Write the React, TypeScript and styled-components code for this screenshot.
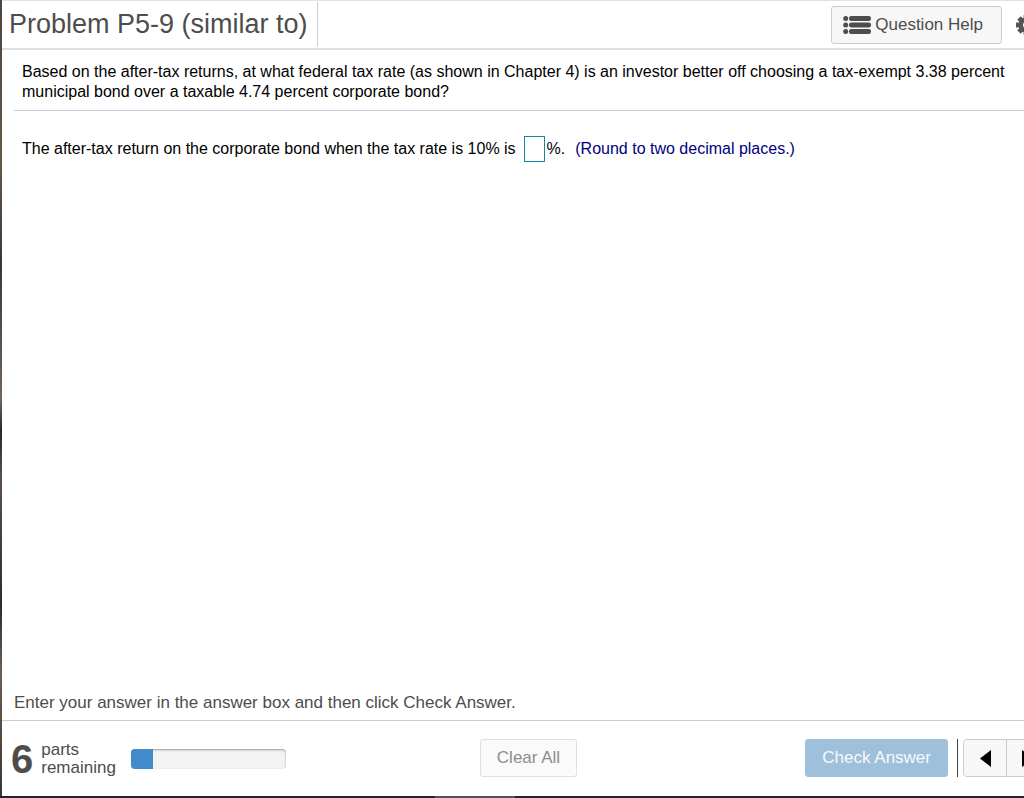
import React from "react";
import styled, { createGlobalStyle } from "styled-components";

const GlobalStyle = createGlobalStyle`
  *, *::before, *::after { box-sizing: border-box; }
  html { background: #fff; }
  body {
    margin: 0;
    overflow: hidden;
    color: #4d4d4d;
    font-family: "Liberation Sans", Arial, sans-serif;
  }
  button, input { font-family: inherit; }
`;

const Shell = styled.div`
  min-height: 100vh;
  padding: 0 0 2px 2px;
  background:
    linear-gradient(90deg, #262425 0 435px, #555354 435px 515px, #262425 515px) bottom / 100% 2px no-repeat,
    linear-gradient(#4c4440 0%, #66594c 20%, #3d3733 33%, #70655c 50%, #29272a 54%, #5c5149 60%, #2f2b2a 76%, #6b6056 84%, #3a3431 100%);
  display: flex;
`;

const Page = styled.div`
  flex: 1;
  min-width: 0;
  display: flex;
  flex-direction: column;
  background: #fff;
  overflow: hidden;
`;

const Header = styled.header`
  display: flex;
  align-items: center;
  height: 50px;
  border-top: 1px solid #dde1ea;
  border-bottom: 2px solid #dae0e8;
`;

const Title = styled.h1`
  margin: 0;
  padding: 0 9px 0 7px;
  font-size: 27px;
  line-height: 45px;
  font-weight: 400;
  white-space: nowrap;
  border-right: 1px solid #c9cedb;
`;

const HeaderTools = styled.div`
  display: flex;
  align-items: center;
  gap: 14px;
  margin: 0 -12px 0 auto;
`;

const Button = styled.button<{ $tone?: "primary" | "muted" }>`
  display: flex;
  align-items: center;
  justify-content: center;
  gap: 4px;
  height: 38px;
  padding: 0 16px;
  white-space: nowrap;
  font-size: 17px;
  line-height: 22px;
  border-radius: 3px;
  border: 1px solid
    ${({ $tone }) => ($tone === "primary" ? "#9fc0db" : $tone === "muted" ? "#dfdfdf" : "#cccccc")};
  background: ${({ $tone }) => ($tone === "primary" ? "#9fc0db" : $tone === "muted" ? "#fafafa" : "#f7f7f7")};
  color: ${({ $tone }) => ($tone === "primary" ? "#f7fafc" : $tone === "muted" ? "#8c8c8c" : "#4d4d4d")};
`;

const HelpButton = styled(Button)`
  padding: 0 18px 0 11px;
`;

const IconButton = styled.button`
  display: flex;
  padding: 0;
  border: 0;
  background: none;
  color: #555;
`;

const Question = styled.section`
  margin-left: 12px;
  padding: 12px 0 8px 8px;
  border-bottom: 1px solid #c6cbe0;
  color: #000;
`;

const BodyText = styled.p`
  margin: 0;
  font-size: 16px;
  line-height: 20px;
`;

const AnswerArea = styled.main`
  flex: 1;
  padding: 25px 20px;
  color: #000;
`;

const AnswerLine = styled.div`
  display: flex;
  align-items: center;
  flex-wrap: wrap;
  font-size: 16px;
  line-height: 20px;
`;

const AnswerInput = styled.input`
  width: 21px;
  height: 26px;
  margin: 0 2px 0 8px;
  padding: 0 2px;
  border: 1px solid #1486a6;
  border-radius: 0;
  background: #fff;
  font-size: 16px;
`;

const Hint = styled.span`
  margin-left: 10px;
  color: #000080;
`;

const Instruction = styled.p`
  margin: 0;
  padding: 0 12px 6px;
  font-size: 17px;
  line-height: 22px;
`;

const Footer = styled.footer`
  display: grid;
  grid-template-columns: 1fr auto 1fr;
  align-items: center;
  height: 76px;
  margin-right: -31px;
  padding-bottom: 1px;
  border-top: 1px solid #c6cbe0;
`;

const Remaining = styled.div`
  display: flex;
  align-items: center;
  padding: 2px 0 0 9px;
`;

const Count = styled.strong`
  font-size: 40px;
  line-height: 40px;
`;

const CountLabel = styled.span`
  width: 76px;
  margin: 0 14px 0 8px;
  font-size: 17px;
  line-height: 18px;
`;

const Track = styled.div`
  width: 155px;
  height: 20px;
  border-radius: 4px;
  overflow: hidden;
  background: #f3f3f3;
  box-shadow: inset 0 1px 2px #999;
`;

const Fill = styled.div`
  height: 100%;
  background: #428bca;
`;

const FooterTools = styled.div`
  display: flex;
  align-items: center;
  justify-content: flex-end;
  padding-right: 6px;
`;

const Divider = styled.span`
  width: 1px;
  height: 38px;
  margin: 0 5px 0 9px;
  background: #444;
`;

const Pager = styled.div`
  display: flex;
  border: 1px solid #ccc;
  border-radius: 4px;
  overflow: hidden;
`;

const PageButton = styled.button`
  display: flex;
  align-items: center;
  justify-content: center;
  width: 42px;
  height: 36px;
  padding: 0;
  border: 0;
  background: #f7f7f7;
  color: #000;
  & + & { border-left: 1px solid #ccc; }
`;

const ListIcon = () => (
  <svg width="28" height="20" viewBox="0 0 28 20" fill="#4d4d4d" aria-hidden="true">
    {[3.5, 10, 16.5].map((y) => (
      <g key={y}>
        <circle cx="2.7" cy={y} r="2.5" />
        <rect x="6" y={y - 2.5} width="22" height="5" rx="2.2" />
      </g>
    ))}
  </svg>
);

const GearIcon = () => (
  <svg width="20" height="20" viewBox="0 0 20 20" fill="none" stroke="currentColor" aria-hidden="true">
    <circle cx="10" cy="10" r="5.2" strokeWidth="4.4" />
    {[0, 45, 90, 135].map((a) => (
      <g key={a} transform={`rotate(${a} 10 10)`}>
        <path d="M10 0v4M10 16v4" strokeWidth="4.8" />
      </g>
    ))}
  </svg>
);

export default function App() {
  const [answer, setAnswer] = React.useState("");
  const progress = 14;
  return (
    <>
      <GlobalStyle />
      <Shell>
        <Page>
          <Header>
            <Title>Problem P5-9 (similar to)</Title>
            <HeaderTools>
              <HelpButton type="button">
                <ListIcon />
                Question Help
              </HelpButton>
              <IconButton type="button" aria-label="Settings">
                <GearIcon />
              </IconButton>
            </HeaderTools>
          </Header>
          <Question>
            <BodyText>
              Based on the after-tax returns, at what federal tax rate (as shown in Chapter 4) is an investor better off
              choosing a tax-exempt 3.38 percent municipal bond over a taxable 4.74 percent corporate bond?
            </BodyText>
          </Question>
          <AnswerArea>
            <AnswerLine>
              <label htmlFor="answer">The after-tax return on the corporate bond when the tax rate is 10% is</label>
              <AnswerInput id="answer" value={answer} onChange={(e) => setAnswer(e.target.value)} />
              <span>%.</span>
              <Hint>(Round to two decimal places.)</Hint>
            </AnswerLine>
          </AnswerArea>
          <Instruction>Enter your answer in the answer box and then click Check Answer.</Instruction>
          <Footer>
            <Remaining>
              <Count>6</Count>
              <CountLabel>parts remaining</CountLabel>
              <Track role="progressbar" aria-label="Progress" aria-valuenow={progress}>
                <Fill style={{ width: `${progress}%` }} />
              </Track>
            </Remaining>
            <Button type="button" $tone="muted">Clear All</Button>
            <FooterTools>
              <Button type="button" $tone="primary">Check Answer</Button>
              <Divider />
              <Pager>
                <PageButton type="button" aria-label="Previous">
                  <svg width="11" height="17" viewBox="0 0 11 17" aria-hidden="true">
                    <path d="M11 0v17L0 8.5z" />
                  </svg>
                </PageButton>
                <PageButton type="button" aria-label="Next">
                  <svg width="11" height="17" viewBox="0 0 11 17" aria-hidden="true">
                    <path d="M0 0v17l11-8.5z" />
                  </svg>
                </PageButton>
              </Pager>
            </FooterTools>
          </Footer>
        </Page>
      </Shell>
    </>
  );
}
